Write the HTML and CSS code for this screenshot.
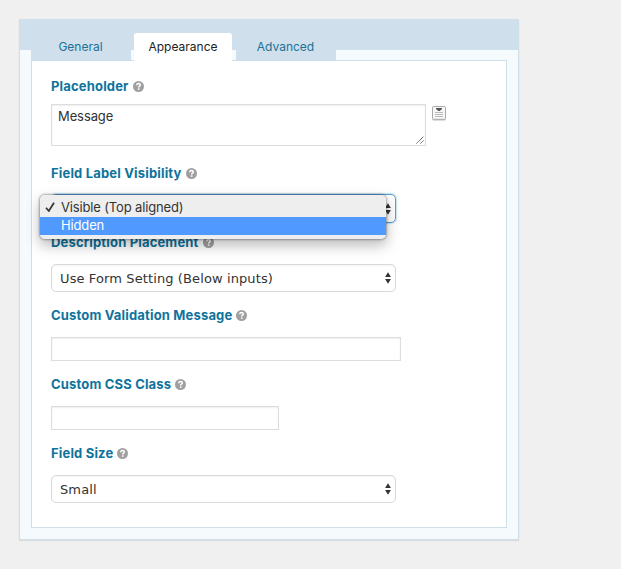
FILE: index.html
```html
<!DOCTYPE html>
<html lang="en">
<head>
<meta charset="utf-8">
<title>Field settings</title>
<link rel="stylesheet" href="styles.css">
</head>
<body>
<svg width="0" height="0" class="defs">
  <symbol id="help" viewBox="0 0 11 11"><circle cx="5.5" cy="5.5" r="5.5" fill="#a0a0a0"/><path d="M3.7 4.2C3.8 2.9 4.6 2.5 5.5 2.5c1 0 1.8.6 1.8 1.5 0 1.2-1.6 1.2-1.6 2.4" fill="none" stroke="#fff" stroke-width="1.5"/><rect x="4.9" y="7.3" width="1.6" height="1.5" fill="#fff"/></symbol>
  <symbol id="arrows" viewBox="0 0 6 12"><path d="M3 0.3L5.9 5H.1zM3 11.7L5.9 7H.1z" fill="#333"/></symbol>
</svg>
<main class="panel">
  <nav class="tabs">
    <a class="tab general">General</a>
    <a class="tab active">Appearance</a>
    <a class="tab advanced">Advanced</a>
  </nav>
  <section class="content">
    <div class="row r1">
      <div class="label"><span>Placeholder</span><svg><use href="#help"/></svg></div>
      <div class="line">
        <div class="area">Message<svg class="grip" viewBox="0 0 8 8"><path d="M.5 7.5l7-7M4.5 7.5l3-3" stroke="#444" stroke-dasharray="1.3 .3" fill="none"/></svg></div>
        <svg class="merge" viewBox="0 0 14 15"><rect x=".5" y="1" width="13" height="13.4" rx="1" fill="#bbb"/><rect x=".5" y=".5" width="13" height="12.8" rx="1" fill="#f7f7f7" stroke="#aaa"/><path d="M4 2h6v1L7.7 5H6.3L4 3z" fill="#555"/><path d="M3 6.5h8M3 8.5h8M3 10.5h8" stroke="#bbb"/></svg>
      </div>
    </div>
    <div class="row r2">
      <div class="label"><span>Field Label Visibility</span><svg><use href="#help"/></svg></div>
      <div class="select focus"><span></span><svg><use href="#arrows"/></svg>
        <div class="menu">
          <div class="option"><svg viewBox="0 0 10 10"><path d="M1 5.7L3.8 9 9 .8" fill="none" stroke="#333" stroke-width="1.7"/></svg><span>Visible (Top aligned)</span></div>
          <div class="option selected"><span>Hidden</span></div>
        </div>
      </div>
    </div>
    <div class="row r3">
      <div class="label"><span>Description Placement</span><svg><use href="#help"/></svg></div>
      <div class="select"><span>Use Form Setting (Below inputs)</span><svg><use href="#arrows"/></svg></div>
    </div>
    <div class="row r4">
      <div class="label"><span>Custom Validation Message</span><svg><use href="#help"/></svg></div>
      <div class="input wide"></div>
    </div>
    <div class="row r5">
      <div class="label"><span>Custom CSS Class</span><svg><use href="#help"/></svg></div>
      <div class="input"></div>
    </div>
    <div class="row r6">
      <div class="label"><span>Field Size</span><svg><use href="#help"/></svg></div>
      <div class="select"><span>Small</span><svg><use href="#arrows"/></svg></div>
    </div>
  </section>
</main>
</body>
</html>
```
FILE: styles.css
```css
* { box-sizing: border-box; }
body { margin: 0; padding: 19px; height: 569px; overflow: hidden; background: #f0f0f0; font: 13px/20px Inter, sans-serif; color: #333; }
.defs { display: block; position: absolute; }
svg { display: block; flex: none; }
.panel { width: 500px; height: 521px; padding: 14px 11px 11px; border: 1px solid #cfdfea; border-top: 0; background: linear-gradient(#cfdfeb 31px, #f5fafd 31px); box-shadow: 0 1px 1px #ddd; }
.tabs { display: flex; height: 27px; align-items: flex-end; }
.tab { width: 100px; height: 27px; padding: 4px 1px 0 0; background: #cfdfeb; color: #1b7298; font-size: 12px; text-align: center; white-space: nowrap; }
.tab.active { width: 98px; height: 28px; margin: 0 4px 0 3px; padding-right: 0; align-self: flex-start; position: relative; background: #fff; color: #222; border-radius: 3px 3px 0 0; }
.content { width: 476px; height: 468px; padding: 15px 19px; border: 1px solid #cfdfea; background: #fff; }
.row { height: 69px; }
.r1 { height: 87px; }
.r3 { height: 73px; }
.label { display: flex; align-items: center; height: 20px; margin-bottom: 12px; color: #0e739c; font-weight: 700; letter-spacing: .17px; white-space: nowrap; }
.label svg { width: 11px; height: 11px; margin-left: 4px; }
.r1 .label { margin-bottom: 8px; }
.line { display: flex; }
.area { position: relative; width: 375px; height: 42px; padding: 1px 6px; border: 1px solid #ddd; box-shadow: inset 0 1px 2px rgba(0,0,0,.07); letter-spacing: -.1px; }
.grip { position: absolute; right: 1px; bottom: 1px; width: 8px; height: 8px; }
.merge { width: 14px; height: 15px; margin: 2px 0 0 6px; }
.select { position: relative; display: flex; justify-content: space-between; align-items: center; width: 345px; height: 28px; padding: 0 4px 0 8px; border: 1px solid #d9d9d9; border-radius: 5px; box-shadow: inset 0 1px 2px rgba(0,0,0,.05); font-family: "DejaVu Sans", sans-serif; letter-spacing: .11px; white-space: nowrap; }
.select > span { padding-top: 2px; }
.select > svg { width: 6px; height: 12px; }
.r2 .label { margin-bottom: 11px; }
.focus { height: 29px; border-color: #5b9dd9; box-shadow: 0 0 2px rgba(30,140,190,.8); }
.input { width: 228px; height: 24px; border: 1px solid #ddd; box-shadow: inset 0 1px 2px rgba(0,0,0,.07); }
.input.wide { width: 350px; }
.menu { position: absolute; z-index: 2; left: -13px; top: -1px; width: 348px; height: 46px; padding-top: 4px; border: 1px solid transparent; border-radius: 6px; background: #eee; background-clip: padding-box; box-shadow: 0 6px 13px rgba(0,0,0,.25), 0 0 2px rgba(0,0,0,.3); font-family: Inter, sans-serif; letter-spacing: -.15px; }
.option { display: flex; align-items: center; height: 18px; padding: 0 0 2px 21px; }
.option svg { width: 10px; height: 10px; margin: 0 6px 0 -16px; }
.selected { background: #5099fe; color: #fff; }
```
